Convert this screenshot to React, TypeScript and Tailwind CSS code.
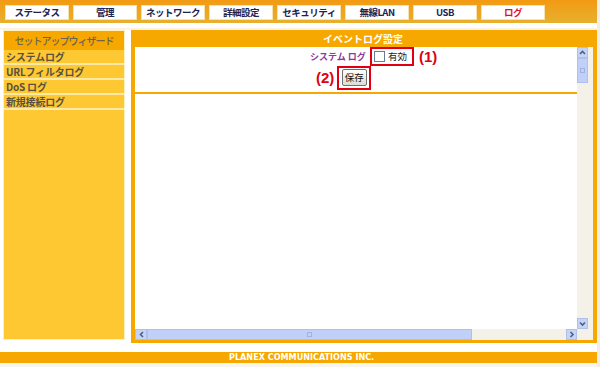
const tabs = [
  { label: "ステータス" },
  { label: "管理" },
  { label: "ネットワーク" },
  { label: "詳細設定" },
  { label: "セキュリティ" },
  { label: "無線LAN" },
  { label: "USB" },
  { label: "ログ", active: true },
];

const menu = ["システムログ", "URLフィルタログ", "DoS ログ", "新規接続ログ"];

function Arrow({ dir }: { dir: "up" | "down" | "left" | "right" }) {
  const d = {
    up: "M2 6 L4.5 3.5 L7 6",
    down: "M2 3.5 L4.5 6 L7 3.5",
    left: "M6 2 L3.5 4.5 L6 7",
    right: "M3.5 2 L6 4.5 L3.5 7",
  }[dir];
  return (
    <svg width="9" height="9" viewBox="0 0 9 9">
      <path d={d} fill="none" stroke="#4d6185" strokeWidth="1.6" />
    </svg>
  );
}

export default function App() {
  return (
    <div
      className="w-[600px] h-[367px] bg-white flex overflow-hidden"
      style={{ fontFamily: '"Noto Sans CJK JP", "Liberation Sans", sans-serif' }}
    >
      <div className="w-[597px] flex flex-col">
        {/* top nav */}
        <div className="h-[23px] bg-gradient-to-b from-[#f29a12] to-[#e7b02c] flex gap-[4px] pl-[5px] pt-[5px]">
          {tabs.map((t) => (
            <div
              key={t.label}
              className={`w-[64px] h-[15px] bg-white border border-[#f6e2b0] flex items-center justify-center text-[9.5px] tracking-[-0.5px] whitespace-nowrap font-bold leading-none ${t.active ? "text-[#e0102a]" : "text-[#1c2450]"}`}
            >
              {t.label}
            </div>
          ))}
        </div>
        <div className="h-[5px] bg-white" />
        <div className="h-[2px] bg-[#fbf3e2]" />

        <div className="flex">
          {/* sidebar */}
          <div className="ml-[3px] w-[122px] h-[310px] bg-[#fec832] border border-[#fff0c0] flex flex-col">
            <div className="h-[19px] bg-[#f7a800] flex items-center justify-center text-[10px] tracking-[-1px] whitespace-nowrap text-[#6e6250] font-medium">
              セットアップウィザード
            </div>
            {menu.map((m) => (
              <div
                key={m}
                className="h-[15px] border-b-[2px] border-[#fde9a6] pl-[2px] flex items-center text-[10px] tracking-[-0.2px] font-bold text-[#5a5140] leading-none whitespace-nowrap"
              >
                {m}
              </div>
            ))}
          </div>

          {/* main panel */}
          <div className="ml-[6px] w-[466px] h-[313px] bg-[#f7a800] px-[4px] pb-[3px] flex flex-col">
            <div className="h-[17px] flex items-center pl-[188px] text-[10px] font-bold text-white">
              イベントログ設定
            </div>
            <div className="flex-1 bg-white flex flex-col">
              <div className="flex flex-1">
                <div className="flex-1 flex flex-col">
                  <div className="flex items-center pl-[175px] h-[19px]">
                    <span className="w-[60px] text-[9px] text-[#8a3aa0] font-bold whitespace-nowrap">システム ログ</span>
                    <div className="w-[44px] h-[19px] border-[2px] border-[#e00012] flex items-center pl-[2px] gap-[3px]">
                      <div className="w-[11px] h-[11px] border border-[#6a7a99] bg-white" />
                      <span className="text-[9.5px] text-[#222]">有効</span>
                    </div>
                    <span className="ml-[5px] text-[15px] font-bold text-[#e00012] leading-none" style={{ fontFamily: '"Liberation Sans", sans-serif' }}>
                      (1)
                    </span>
                  </div>
                  <div className="flex items-center pl-[181px] mt-[-1px] h-[25px]">
                    <span className="text-[15px] font-bold text-[#e00012] leading-none" style={{ fontFamily: '"Liberation Sans", sans-serif' }}>
                      (2)
                    </span>
                    <div className="ml-[3px] w-[34px] h-[24px] border-[2px] border-[#e00012] flex items-center justify-center">
                      <div className="w-[25px] h-[17px] border border-[#707070] rounded-[2px] bg-gradient-to-b from-white to-[#dcdcd4] flex items-center justify-center text-[9.5px] text-[#111] leading-none">
                        保存
                      </div>
                    </div>
                  </div>
                  <div className="mt-[2px] h-[2px] bg-[#f7a800]" />
                </div>
                {/* vertical scrollbar */}
                <div className="w-[16px] bg-[#f4f1e9] flex flex-col">
                  <div className="w-[11px] flex flex-col flex-1">
                    <div className="h-[11px] bg-[#c5d3f7] border border-[#b0c0e8] flex items-center justify-center">
                      <Arrow dir="up" />
                    </div>
                    <div className="h-[25px] bg-[#c0d0f8] border border-[#b0c0ea] flex items-center justify-center">
                      <div className="w-[5px] h-[5px] border border-[#9fb2e0]" />
                    </div>
                    <div className="flex-1 bg-[#f4f1e9]" />
                    <div className="h-[11px] bg-[#c5d3f7] border border-[#b0c0e8] flex items-center justify-center">
                      <Arrow dir="down" />
                    </div>
                  </div>
                </div>
              </div>
              {/* horizontal scrollbar */}
              <div className="h-[11px] flex bg-[#f4f1e9]">
                <div className="w-[12px] bg-[#c5d3f7] border border-[#b0c0e8] flex items-center justify-center">
                  <Arrow dir="left" />
                </div>
                <div className="w-[325px] bg-[#c0d0f8] border border-[#b0c0ea] flex items-center justify-center">
                  <div className="w-[5px] h-[5px] border border-[#9fb2e0]" />
                </div>
                <div className="flex-1" />
                <div className="w-[11px] bg-[#c5d3f7] border border-[#b0c0e8] flex items-center justify-center">
                  <Arrow dir="right" />
                </div>
                <div className="w-[16px]" />
              </div>
            </div>
          </div>
        </div>

        <div className="h-[9px]" />
        {/* footer */}
        <div className="h-[11px] bg-[#f7a800] flex items-center pl-[229px] text-[9px] font-bold text-white leading-none" style={{ fontFamily: '"DejaVu Sans Condensed", "DejaVu Sans", sans-serif' }}>
          PLANEX COMMUNICATIONS INC.
        </div>
        <div className="flex-1 bg-[#f8f4ee]" />
      </div>
      <div className="w-[3px] bg-[#f1eee8]" />
    </div>
  );
}
